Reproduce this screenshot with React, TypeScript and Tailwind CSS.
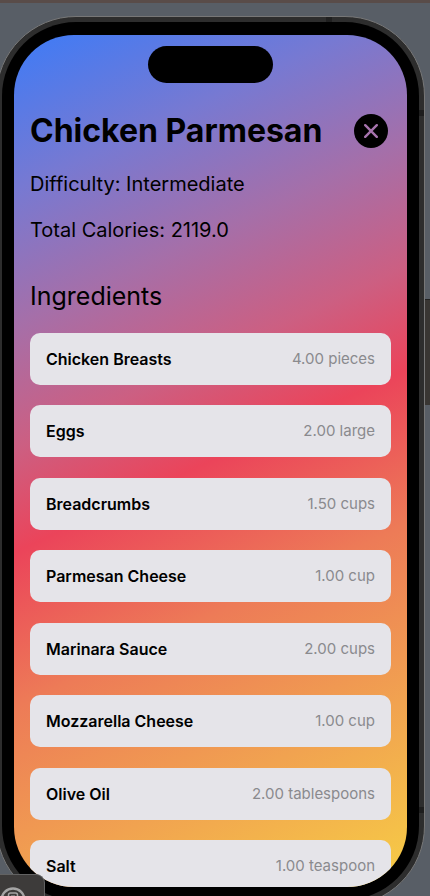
const ingredients = [
  { name: "Chicken Breasts", amount: "4.00 pieces" },
  { name: "Eggs", amount: "2.00 large" },
  { name: "Breadcrumbs", amount: "1.50 cups" },
  { name: "Parmesan Cheese", amount: "1.00 cup" },
  { name: "Marinara Sauce", amount: "2.00 cups" },
  { name: "Mozzarella Cheese", amount: "1.00 cup" },
  { name: "Olive Oil", amount: "2.00 tablespoons" },
  { name: "Salt", amount: "1.00 teaspoon" },
];

function CloseButton() {
  return (
    <button type="button" aria-label="Close" className="flex size-[34px] shrink-0 items-center justify-center rounded-full bg-black text-[#a673ad]">
      <svg viewBox="0 0 14 14" className="size-[14px]" fill="none" stroke="currentColor" strokeWidth="2.4" strokeLinecap="round">
        <path d="M1.200 1.200 12.800 12.800M12.800 1.200 1.200 12.800" />
      </svg>
    </button>
  );
}

function RecipeScreen() {
  return (
    <main className="flex h-full flex-col overflow-hidden rounded-[60px] bg-[linear-gradient(155deg,#3d7bf7_0%,#7779d2_15%,#a56fa9_28%,#cc5f82_40%,#eb445a_50%,#ed7b57_65%,#f1a350_82%,#f7ce45_100%)] px-4 pt-[11px] text-black">
      <div className="h-[37px] w-[125px] shrink-0 self-center rounded-full bg-black" />
      <header className="mt-7 flex shrink-0 items-center justify-between pr-[3px]">
        <h1 className="text-[32px] leading-[40px] font-bold whitespace-nowrap">Chicken Parmesan</h1>
        <CloseButton />
      </header>
      <div className="mt-5 flex flex-col gap-5 text-[20px] leading-[26px]">
        <p>Difficulty: Intermediate</p>
        <p>Total Calories: 2119.0</p>
      </div>
      <h2 className="mt-9 text-[25px] leading-[34px]">Ingredients</h2>
      <ul className="mt-5 -mb-[5px] flex flex-1 flex-col justify-between">
        {ingredients.map((item) => (
          <li key={item.name} className="flex h-[52px] shrink-0 items-center justify-between rounded-[10px] bg-[#e5e4e9] px-4">
            <span className="text-[16px] leading-5 font-semibold">{item.name}</span>
            <span className="text-[15px] leading-5 text-[#8a8a8e]">{item.amount}</span>
          </li>
        ))}
      </ul>
    </main>
  );
}

export default function App() {
  return (
    <div className="relative h-screen overflow-hidden border-t-3 border-[#594c49] bg-[#585e66] pt-[13px] font-['Inter',sans-serif]">
      <div className="absolute top-[296px] right-0 h-[106px] w-[6px] border-t border-[#222] bg-[#393633]" />
      <div className="relative mr-[5px] -ml-1 h-[calc(100vh-6px)] rounded-[80px] border border-[#777] bg-[#2d2d2d] p-[5px]">
        <div className="absolute top-0 right-[92px] h-[5px] w-[6px] bg-[#202020]" />
        <div className="absolute top-[93px] right-0 h-[6px] w-[5px] bg-[#1d1d1d]" />
        <div className="absolute top-[790px] right-0 h-[6px] w-[5px] bg-[#1d1d1d]" />
        <div className="h-full rounded-[74px] bg-black px-3 py-[13px]">
          <RecipeScreen />
        </div>
      </div>
      <div className="absolute bottom-0 -left-1 h-[22px] w-[49px] overflow-hidden rounded-tr-[9px] border-t border-r border-[#626262] bg-[#3d3b3a]">
        <svg viewBox="0 0 26 26" className="mt-3 ml-1 size-[26px]" fill="none" stroke="#a5a5a5" strokeWidth="2.400">
          <circle cx="13" cy="13" r="11.500" />
          <rect x="8.500" y="6" width="9" height="14" rx="2" strokeWidth="1.500" />
          <path d="M11 9h4M11 12h4" strokeWidth="1" />
        </svg>
      </div>
    </div>
  );
}
